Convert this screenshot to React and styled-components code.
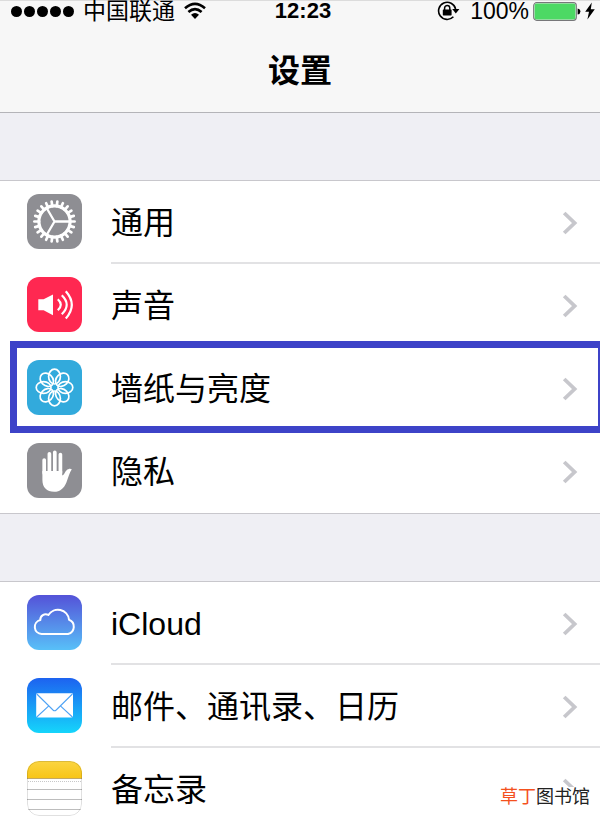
import styled, { createGlobalStyle } from "styled-components";

const GlobalStyle = createGlobalStyle`
  * {
    box-sizing: border-box;
  }

  body {
    margin: 0;
    background: #efeff4;
    color: #000;
    font-family: "Liberation Sans", "Noto Sans CJK SC", sans-serif;
  }
`;

const Page = styled.div`
  position: relative;
  overflow-x: clip;
`;

const Header = styled.header`
  background: #f7f7f7;
  border-top: 1px solid #dcdcdc;
  border-bottom: 1px solid #b4b4b8;
`;

const StatusBar = styled.div`
  display: grid;
  grid-template-columns: 1fr auto 1fr;
  align-items: center;
  height: 18px;
  padding: 0 5px 0 11px;
  font-size: 23px;
  line-height: 18px;
  white-space: nowrap;
`;

const StatusSide = styled.div`
  display: flex;
  align-items: center;
  justify-content: ${(props) => (props.$end ? "flex-end" : "flex-start")};
  gap: ${(props) => (props.$end ? "4px" : "9px")};
`;

const Dots = styled.div`
  display: flex;
  gap: 2px;
`;

const Dot = styled.span`
  width: 11px;
  height: 11px;
  border-radius: 50%;
  background: #000;
`;

const Time = styled.time`
  font-size: 22px;
  font-weight: 700;
`;

const Percent = styled.span`
  margin-left: 6px;
`;

const StatusIcon = styled.svg`
  flex: none;
  display: block;
`;

const Title = styled.h1`
  margin: 0;
  padding: 28px 0 17px;
  font-size: 32px;
  line-height: 48px;
  font-weight: 700;
  text-align: center;
`;

const Group = styled.ul`
  list-style: none;
  margin: 67px 0 0;
  padding: 0;
  background: #fff;
  border-top: 1px solid #c8c7cc;
  border-bottom: 1px solid #c8c7cc;

  &:last-child {
    border-bottom: 0;
  }
`;

const Item = styled.li`
  position: relative;
`;

const Row = styled.a`
  display: flex;
  align-items: stretch;
  gap: 29px;
  min-height: 83px;
  padding-left: 27px;
  color: inherit;
  text-decoration: none;
`;

const RowBody = styled.span`
  flex: 1;
  display: flex;
  align-items: center;
  justify-content: space-between;
  padding: 2px 22px 0 0;
  border-bottom: 2px solid #e2e2e4;
  font-size: 32px;
  line-height: 40px;

  ${Item}:last-child & {
    border-bottom-color: transparent;
  }
`;

const Icon = styled.svg`
  flex: none;
  align-self: center;
  display: block;
  width: 55px;
  height: 55px;
  margin-bottom: 2px;
  border-radius: 12px;
`;

// frame drawn round the highlighted row, runs off the right edge
const Frame = styled.div`
  position: absolute;
  top: -6px;
  right: -5px;
  bottom: -3px;
  left: 10px;
  border: 7px solid #3d43c8;
  pointer-events: none;
`;

const Watermark = styled.div`
  position: absolute;
  right: 10px;
  bottom: 24px;
  background: #fff;
  color: #222;
  font-size: 18px;
  line-height: 20px;
`;

const Accent = styled.span`
  color: #f4511e;
`;

const teeth = Array.from({ length: 22 }, (_, i) => ((i + 0.5) * 360) / 22);
const petals = Array.from({ length: 8 }, (_, i) => i * 45);

const GearIcon = () => (
  <Icon viewBox="0 0 55 55" aria-hidden="true">
    <rect width="55" height="55" fill="#8e8e93" />
    <g stroke="#fff" fill="none">
      <circle cx="27.5" cy="27.5" r="15.6" strokeWidth="3.2" />
      {teeth.map((a) => (
        <path key={a} d="M27.5 12V7.4" strokeWidth="2.7" strokeLinecap="round" transform={`rotate(${a} 27.5 27.5)`} />
      ))}
      <path d="M27.5 27.5H43M27.5 27.5L19.6 14M27.5 27.5L19.6 41" strokeWidth="2.3" />
    </g>
  </Icon>
);

const SoundIcon = () => (
  <Icon viewBox="0 0 55 55" aria-hidden="true">
    <rect width="55" height="55" fill="#ff2851" />
    <path d="M11.3 22.3H16.6L26 17.6V38.2L16.6 33.2H11.3Z" fill="#fff" />
    <g stroke="#fff" fill="none" strokeWidth="2.2">
      <path d="M30.8 22.3Q36.8 27.8 30.8 33.3" />
      <path d="M34.8 18.3Q44.6 27.8 34.8 37.3" />
      <path d="M38.8 14.2Q50.8 27.8 38.8 41.4" />
    </g>
  </Icon>
);

const FlowerIcon = () => (
  <Icon viewBox="0 0 55 55" aria-hidden="true">
    <rect width="55" height="55" fill="#32aadc" />
    <g stroke="#fff" fill="none" strokeWidth="1.7">
      {petals.map((a) => (
        <ellipse key={a} cx="27.5" cy="16.6" rx="5.9" ry="7.4" transform={`rotate(${a} 27.5 27.5)`} />
      ))}
    </g>
  </Icon>
);

const HandIcon = () => (
  <Icon viewBox="0 0 55 55" aria-hidden="true">
    <rect width="55" height="55" fill="#8e8e93" />
    <path d="M17.2 30V17M22.4 30V10.8M27.8 30V9.3M33.4 30V11.6" stroke="#fff" strokeWidth="3.7" strokeLinecap="round" />
    <path
      d="M15.4 28H35.2V32.6C37.2 32 38 28.6 39.6 27.2C41.2 25.7 43.4 25.2 44.8 26.2C42.2 29.8 41.4 34.6 39.4 39.4C37 45.2 33 48.8 27.2 48.8C19.6 48.8 15.4 44.2 15.4 37Z"
      fill="#fff"
    />
  </Icon>
);

const CloudIcon = () => (
  <Icon viewBox="0 0 55 55" aria-hidden="true">
    <defs>
      <linearGradient id="cloudFill" x1="0" y1="0" x2="0" y2="1">
        <stop offset="0" stopColor="#5452d8" />
        <stop offset="1" stopColor="#58c0f8" />
      </linearGradient>
    </defs>
    <rect width="55" height="55" fill="url(#cloudFill)" />
    <path
      d="M14.6 39H41A7.5 7.5 0 0 0 42 24.7A11.2 11.2 0 0 0 21.4 20A5.4 5.4 0 0 0 13.3 25A7.1 7.1 0 0 0 14.6 39Z"
      fill="none"
      stroke="#fff"
      strokeWidth="2"
      strokeLinejoin="round"
    />
  </Icon>
);

const MailIcon = () => (
  <Icon viewBox="0 0 55 55" aria-hidden="true">
    <defs>
      <linearGradient id="mailFill" x1="0" y1="0" x2="0" y2="1">
        <stop offset="0" stopColor="#1d62f0" />
        <stop offset="1" stopColor="#15d5fb" />
      </linearGradient>
    </defs>
    <rect width="55" height="55" fill="url(#mailFill)" />
    <rect x="9.2" y="15.3" width="36.8" height="24.2" rx="1.4" fill="#fff" />
    <g fill="none" stroke="#4fa3f5" strokeWidth="1.1">
      <path d="M9.8 16L26 32Q27.6 33.4 29.2 32L45.4 16" />
      <path d="M9.8 39L21.8 27.8M45.4 39L33.4 27.8" />
    </g>
  </Icon>
);

const NotesIcon = () => (
  <Icon viewBox="0 0 55 55" aria-hidden="true">
    <defs>
      <linearGradient id="notesFill" x1="0" y1="0" x2="0" y2="1">
        <stop offset="0" stopColor="#fbd541" />
        <stop offset="1" stopColor="#f8c517" />
      </linearGradient>
    </defs>
    <rect width="55" height="55" fill="#fff" />
    <rect width="55" height="17" fill="url(#notesFill)" />
    <path d="M0 17.5H55" stroke="#c3a864" />
    <path d="M1 20.5H55" stroke="#c8c8c8" strokeDasharray="1 1" />
    <path d="M0 28.5H55M0 38.5H55M0 48.5H55" stroke="#bdbdbd" />
    <rect x="0.5" y="0.5" width="54" height="54" rx="11.5" fill="none" stroke="#000" strokeOpacity="0.12" />
  </Icon>
);

const Chevron = () => (
  <StatusIcon width="16" height="24" viewBox="0 0 16 24" aria-hidden="true">
    <path d="M2.2 2L12.6 12L2.2 22" fill="none" stroke="#c7c7cc" strokeWidth="3.8" />
  </StatusIcon>
);

const WifiIcon = () => (
  <StatusIcon width="22" height="18" viewBox="0 0 22 18" aria-hidden="true">
    <g fill="none" stroke="#000" strokeWidth="2.6">
      <path d="M1 6.2Q11 -2.6 21 6.2" />
      <path d="M4.4 10Q11 4.2 17.6 10" />
    </g>
    <path d="M7 12.8Q11 9.4 15 12.8L11 17Z" />
  </StatusIcon>
);

const LockIcon = () => (
  <StatusIcon width="23" height="20" viewBox="0 0 23 20" aria-hidden="true">
    <path d="M18.6 8A8.6 8.6 0 1 0 16.4 15.8" fill="none" stroke="#000" strokeWidth="1.6" />
    <path d="M15.2 8H22.4L18.8 12.4Z" />
    <rect x="5.8" y="8.4" width="8.8" height="6" rx="0.6" />
    <path d="M7.6 9V7A2.6 2.6 0 0 1 12.8 7V9" fill="none" stroke="#000" strokeWidth="1.5" />
  </StatusIcon>
);

const BatteryIcon = () => (
  <StatusIcon width="48" height="19" viewBox="0 0 48 19" aria-hidden="true">
    <rect x="0.7" y="0.7" width="42.6" height="17.6" rx="3" fill="#fff" stroke="#77777a" strokeWidth="1.2" />
    <rect x="1.6" y="1.6" width="40.8" height="15.8" rx="2" fill="#4cd964" />
    <path d="M44.6 6.4Q47.4 7 47.4 9.5T44.6 12.6Z" />
  </StatusIcon>
);

const BoltIcon = () => (
  <StatusIcon width="10" height="18" viewBox="0 0 10 18" aria-hidden="true">
    <path d="M6.8 0.4L0.2 9.8H4L2.4 17.4L9.8 7.2H5.8Z" />
  </StatusIcon>
);

const groups = [
  [
    { id: "general", label: "通用", Glyph: GearIcon },
    { id: "sound", label: "声音", Glyph: SoundIcon },
    { id: "wallpaper", label: "墙纸与亮度", Glyph: FlowerIcon, framed: true },
    { id: "privacy", label: "隐私", Glyph: HandIcon },
  ],
  [
    { id: "icloud", label: "iCloud", Glyph: CloudIcon },
    { id: "mail", label: "邮件、通讯录、日历", Glyph: MailIcon },
    { id: "notes", label: "备忘录", Glyph: NotesIcon },
  ],
];

const SettingsRow = ({ item }) => {
  const { id, label, Glyph, framed } = item;

  return (
    <Item>
      <Row href={`#${id}`}>
        <Glyph />
        <RowBody>
          {label}
          <Chevron />
        </RowBody>
      </Row>
      {framed && <Frame />}
    </Item>
  );
};

const App = () => {
  return (
    <>
      <GlobalStyle />
      <Page lang="zh-CN">
        <Header>
          <StatusBar>
            <StatusSide>
              <Dots>
                {[1, 2, 3, 4, 5].map((n) => (
                  <Dot key={n} />
                ))}
              </Dots>
              中国联通
              <WifiIcon />
            </StatusSide>
            <Time>12:23</Time>
            <StatusSide $end>
              <LockIcon />
              <Percent>100%</Percent>
              <BatteryIcon />
              <BoltIcon />
            </StatusSide>
          </StatusBar>
          <Title>设置</Title>
        </Header>
        <main>
          {groups.map((items, i) => (
            <Group key={i}>
              {items.map((item) => (
                <SettingsRow key={item.id} item={item} />
              ))}
            </Group>
          ))}
        </main>
        <Watermark>
          <Accent>草丁</Accent>图书馆
        </Watermark>
      </Page>
    </>
  );
};

export default App;
